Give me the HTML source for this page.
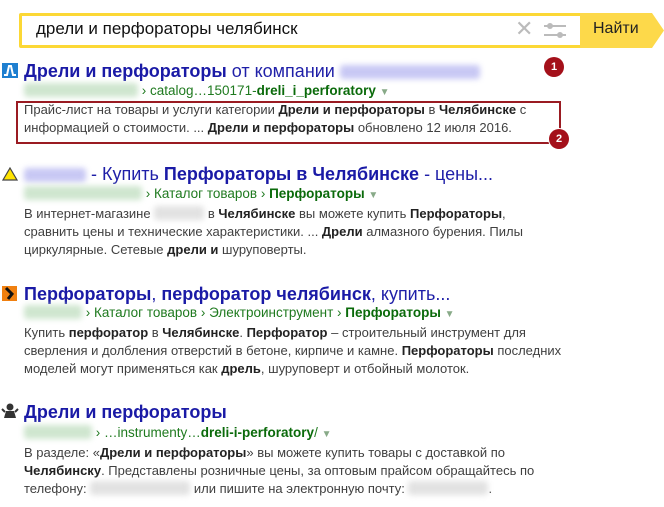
<!DOCTYPE html><html><head><meta charset="utf-8"><style>
body{margin:0;width:664px;height:507px;background:#fff;font-family:"Liberation Sans",Arial,sans-serif;position:relative;overflow:hidden}
.a{position:absolute;white-space:nowrap}
.t{font-size:18px;color:#1f1fa8}
.t b{color:#1a1aa6}
.u{font-size:13.5px;color:#1f7a1f}
.u b{color:#0a6a0a}
.s{font-size:13px;color:#404040;line-height:18px}
.s b{color:#222}
.bl{display:inline-block;filter:blur(3px);vertical-align:-2px;height:14px;border-radius:3px}
.c{position:absolute;width:20px;height:20px;border-radius:50%;background:#a4101a;color:#fff;font-size:11px;font-weight:bold;text-align:center;line-height:20px;box-shadow:0 0 0 1px #fff}
.ar{color:#8a8;font-size:10px}
</style></head><body>
<div class="a" style="left:19px;top:13px;width:558px;height:29px;border:3px solid #fcd835;border-radius:2px;background:#fff"></div>
<div class="a" style="left:36px;top:19px;font-size:17px;color:#111">дрели и перфораторы челябинск</div>
<div class="a" style="left:515px;top:16px;font-size:22px;color:#bbb">✕</div>
<svg class="a" style="left:542px;top:20px" width="26" height="20"><line x1="2" y1="6" x2="24" y2="6" stroke="#bbb" stroke-width="2"/><line x1="2" y1="15" x2="24" y2="15" stroke="#bbb" stroke-width="2"/><circle cx="8" cy="6" r="3" fill="#bbb"/><circle cx="18" cy="15" r="3" fill="#bbb"/></svg>
<svg class="a" style="left:580px;top:13px" width="84" height="35"><polygon points="0,0 72,0 84,17.5 72,35 0,35" fill="#fdd94a"/></svg>
<div class="a" style="left:593px;top:20px;font-size:16px;color:#222">Найти</div>

<svg class="a" style="left:2px;top:63px" width="16" height="15"><rect width="16" height="15" fill="#1e7fd0"/><path d="M2 12 H5 L7 3 H9 L11 12 H14" stroke="#fff" stroke-width="2" fill="none"/></svg>
<div class="a t" style="left:24px;top:61px"><b>Дрели и перфораторы</b> от компании <span class="bl" style="background:#c8c8f4;width:140px"></span></div>
<div class="a u" style="left:24px;top:83px"><span class="bl" style="background:#cfe6cf;width:114px"></span> › catalog…150171-<b>dreli_i_perforatory</b> <span class="ar">▼</span></div>
<div class="a s" style="left:24px;top:101px">Прайс-лист на товары и услуги категории <b>Дрели и перфораторы</b> в <b>Челябинске</b> с<br>информацией о стоимости. ... <b>Дрели и перфораторы</b> обновлено 12 июля 2016.</div>
<div class="a" style="left:16px;top:101px;width:541px;height:39px;border:2px solid #9a1b22"></div>
<div class="c" style="left:544px;top:57px">1</div>
<div class="c" style="left:549px;top:129px">2</div>

<svg class="a" style="left:2px;top:167px" width="16" height="14"><polygon points="8,1 15,13 1,13" fill="#ffe400" stroke="#444" stroke-width="1.2"/></svg>
<div class="a t" style="left:24px;top:164px"><span class="bl" style="background:#c8c8f4;width:62px"></span> - Купить <b>Перфораторы в Челябинске</b> - цены...</div>
<div class="a u" style="left:24px;top:186px"><span class="bl" style="background:#cfe6cf;width:118px"></span> › Каталог товаров › <b>Перфораторы</b> <span class="ar">▼</span></div>
<div class="a s" style="left:24px;top:205px">В интернет-магазине <span class="bl" style="background:#e2e2e2;width:50px"></span> в <b>Челябинске</b> вы можете купить <b>Перфораторы</b>,<br>сравнить цены и технические характеристики. ... <b>Дрели</b> алмазного бурения. Пилы<br>циркулярные. Сетевые <b>дрели и</b> шуруповерты.</div>

<svg class="a" style="left:2px;top:286px" width="15" height="15"><rect width="15" height="15" fill="#f08010"/><path d="M4 2 L10 8 L6 13" stroke="#111" stroke-width="3" fill="none"/></svg>
<div class="a t" style="left:24px;top:284px"><b>Перфораторы</b>, <b>перфоратор челябинск</b>, купить...</div>
<div class="a u" style="left:24px;top:305px"><span class="bl" style="background:#cfe6cf;width:58px"></span> › Каталог товаров › Электроинструмент › <b>Перфораторы</b> <span class="ar">▼</span></div>
<div class="a s" style="left:24px;top:324px">Купить <b>перфоратор</b> в <b>Челябинске</b>. <b>Перфоратор</b> – строительный инструмент для<br>сверления и долбления отверстий в бетоне, кирпиче и камне. <b>Перфораторы</b> последних<br>моделей могут применяться как <b>дрель</b>, шуруповерт и отбойный молоток.</div>

<svg class="a" style="left:1px;top:402px" width="18" height="17"><circle cx="9" cy="5" r="3.5" fill="#333"/><path d="M3 16 L5 9 H13 L15 16Z" fill="#333"/><path d="M1 7 L4 10 M17 7 L14 10" stroke="#333" stroke-width="2"/></svg>
<div class="a t" style="left:24px;top:402px"><b>Дрели и перфораторы</b></div>
<div class="a u" style="left:24px;top:425px"><span class="bl" style="background:#cfe6cf;width:68px"></span> › …instrumenty…<b>dreli-i-perforatory</b>/ <span class="ar">▼</span></div>
<div class="a s" style="left:24px;top:444px">В разделе: «<b>Дрели и перфораторы</b>» вы можете купить товары с доставкой по<br><b>Челябинску</b>. Представлены розничные цены, за оптовым прайсом обращайтесь по<br>телефону: <span class="bl" style="background:#e2e2e2;width:100px"></span> или пишите на электронную почту: <span class="bl" style="background:#e2e2e2;width:80px"></span>.</div>
</body></html>
